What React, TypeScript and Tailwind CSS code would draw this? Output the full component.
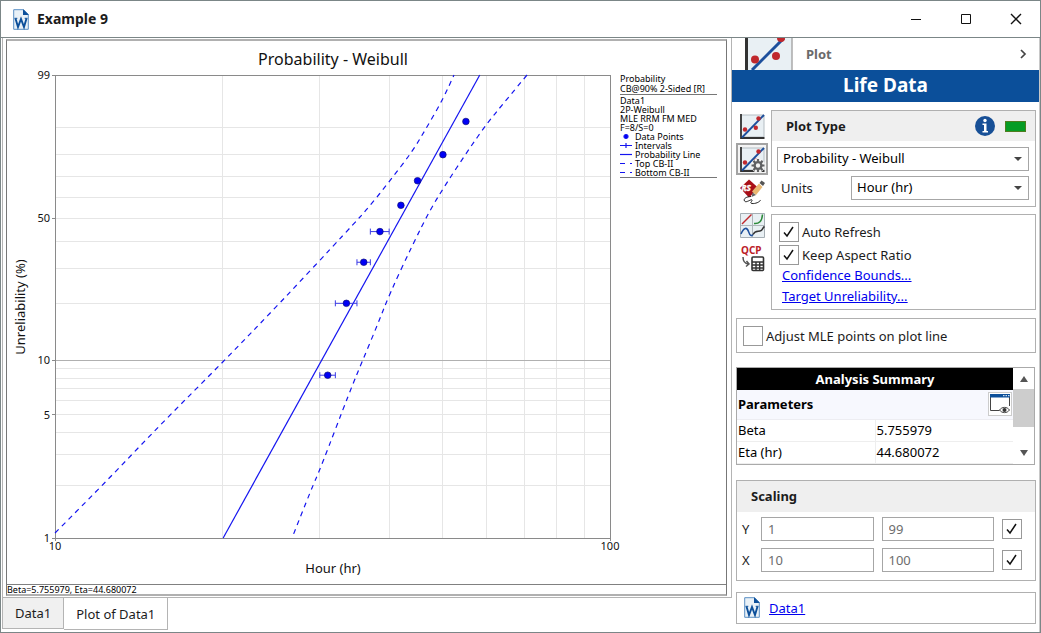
import { useState } from "react";
import type { ReactNode } from "react";
import clsx from "clsx";

// plot area of the chart, in svg units
const LEFT = 55;
const RIGHT = 610;
const TOP = 75;
const BOTTOM = 538;

const weibull = (percent: number) => Math.log(-Math.log(1 - percent / 100));
const xOf = (hours: number) => LEFT + Math.log10(hours / 10) * (RIGHT - LEFT);
const yOf = (percent: number) =>
  TOP +
  ((weibull(99) - weibull(percent)) / (weibull(99) - weibull(1))) *
    (BOTTOM - TOP);

const xGrid = [20, 30, 40, 50, 60, 70, 80, 90];
const yGrid = [2, 3, 4, 5, 6, 7, 8, 9, 20, 30, 40, 50, 60, 70, 80, 90];
const yTicks = [1, 5, 10, 50, 99];

const dataPoints = [
  { hours: 31, percent: 8.3, from: 30, to: 32 },
  { hours: 33.5, percent: 20.1, from: 32, to: 35 },
  { hours: 36, percent: 32.05, from: 35, to: 37 },
  { hours: 38.5, percent: 44, from: 37, to: 40 },
  { hours: 42, percent: 56 },
  { hours: 45, percent: 67.9 },
  { hours: 50, percent: 79.9 },
  { hours: 55, percent: 91.7 },
];

const topBound = [
  [55, 533], [98, 490], [163, 422], [223, 362], [280, 303], [350, 228],
  [369, 207], [389, 182], [412, 152], [427, 127], [443, 99], [454, 75],
];
const bottomBound = [
  [527, 75], [508, 98], [488, 122], [467, 152], [446, 184], [430, 210],
  [413, 244], [390, 293], [377, 326], [362, 362], [350, 391], [321, 467],
  [311, 490], [292, 538],
];

// quadratic curve through the midpoints of the segments
function smooth(points: number[][]) {
  let d = `M${points[0].join(" ")}`;
  for (let i = 1; i < points.length - 1; i++) {
    const [x, y] = points[i];
    const [nx, ny] = points[i + 1];
    d += `Q${x} ${y} ${(x + nx) / 2} ${(y + ny) / 2}`;
  }
  return d + `L${points[points.length - 1].join(" ")}`;
}

function ProbabilityPlot() {
  return (
    <svg
      viewBox="7 41 613 543"
      className="block h-auto min-w-0 flex-1"
      fill="#111"
      role="img"
      aria-label="Weibull probability plot"
    >
      <text x="333" y="65" fontSize="16" textAnchor="middle">
        Probability - Weibull
      </text>

      <g stroke="#e6e6e6" shapeRendering="crispEdges">
        {xGrid.map((v) => (
          <line key={v} x1={xOf(v)} x2={xOf(v)} y1={TOP} y2={BOTTOM} />
        ))}
        {yGrid.map((v) => (
          <line key={v} x1={LEFT} x2={RIGHT} y1={yOf(v)} y2={yOf(v)} />
        ))}
      </g>
      <g stroke="#8a8a8a" fill="none" shapeRendering="crispEdges">
        <line x1={LEFT} x2={RIGHT} y1={yOf(10)} y2={yOf(10)} stroke="#b0b0b0" />
        <rect x={LEFT} y={TOP} width={RIGHT - LEFT} height={BOTTOM - TOP} />
        {yTicks.map((v) => (
          <line key={v} x1={LEFT - 3} x2={LEFT} y1={yOf(v)} y2={yOf(v)} />
        ))}
        <line x1={LEFT} x2={LEFT} y1={BOTTOM} y2={BOTTOM + 3} />
        <line x1={RIGHT} x2={RIGHT} y1={BOTTOM} y2={BOTTOM + 3} />
      </g>

      <g fontSize="11">
        {yTicks.map((v) => (
          <text key={v} x="50" y={yOf(v) + 4} textAnchor="end">
            {v}
          </text>
        ))}
        <text x="55" y="550" textAnchor="middle">
          10
        </text>
        <text x="610" y="550" textAnchor="middle">
          100
        </text>
      </g>
      <g fontSize="13" textAnchor="middle">
        <text x="333" y="573">
          Hour (hr)
        </text>
        <text transform="translate(25 307) rotate(-90)">Unreliability (%)</text>
      </g>

      <g stroke="#1414f0" strokeWidth="1.2" fill="none">
        <line x1={xOf(20.09)} y1={BOTTOM} x2={xOf(58.26)} y2={TOP} />
        <path d={smooth(topBound)} strokeDasharray="5 4.5" />
        <path d={smooth(bottomBound)} strokeDasharray="5 4.5" />
      </g>
      {dataPoints.map((p) => (
        <g key={p.hours}>
          {p.from && p.to && (
            <path
              d={`M${xOf(p.from)} ${yOf(p.percent)}H${xOf(p.to)}m0 -3v6M${xOf(p.from)} ${yOf(p.percent) - 3}v6`}
              stroke="#3a3ae6"
            />
          )}
          <circle
            cx={xOf(p.hours)}
            cy={yOf(p.percent)}
            r="3.3"
            fill="#0000f5"
            stroke="#10107a"
            strokeWidth="0.7"
          />
        </g>
      ))}
    </svg>
  );
}

function LegendRow({ mark, children }: { mark: ReactNode; children: ReactNode }) {
  return (
    <li className="flex gap-[3px]">
      <svg
        viewBox="0 0 12 9"
        className="h-[9px] w-3 shrink-0"
        stroke="#1414f0"
        strokeWidth="1.2"
      >
        {mark}
      </svg>
      {children}
    </li>
  );
}

function Legend() {
  return (
    <aside className="mt-[33px] w-[106px] shrink-0 pr-[9px] text-[9px] leading-[9px] whitespace-nowrap">
      <div className="border-b border-[#777] leading-[10px]">
        <p>Probability</p>
        <p>CB@90% 2-Sided [R]</p>
      </div>
      <div className="border-b border-[#777] pt-px">
        <p>Data1</p>
        <p>2P-Weibull</p>
        <p>MLE RRM FM MED</p>
        <p>F=8/S=0</p>
        <ul>
          <LegendRow mark={<circle cx="6" cy="4.5" r="2" fill="#0000f5" />}>
            Data Points
          </LegendRow>
          <LegendRow mark={<path d="M0 4.5h12M6 2v5" />}>Intervals</LegendRow>
          <LegendRow mark={<path d="M0 4.5h12" />}>Probability Line</LegendRow>
          <LegendRow mark={<path d="M0 4.5h5m5 0h2" />}>Top CB-II</LegendRow>
          <LegendRow mark={<path d="M0 4.5h5m5 0h2" />}>Bottom CB-II</LegendRow>
        </ul>
      </div>
    </aside>
  );
}

function WordDocIcon() {
  return (
    <svg viewBox="0 0 16 21" className="h-[21px] w-4 shrink-0" fill="none">
      <path d="M.7.7h10l4.600 4.600v15H.7z" fill="#e9f1f7" stroke="#5a8fc4" />
      <path d="M10 .2 15.800 6H10z" fill="#0c4f9a" />
      <path
        d="M2.500 9.500 5 18l3-8 3 8 2.500-8.500"
        stroke="#0c4f9a"
        strokeWidth="1.900"
      />
      <path d="M1.500 9.300h2.800M11.700 9.300h2.800" stroke="#0c4f9a" />
    </svg>
  );
}

function ScatterIcon({ gear = false }: { gear?: boolean }) {
  return (
    <svg viewBox="0 0 25 25" className="size-[25px]" fill="none">
      <path d="M1 1h23v22H1z" fill="#e9f0f4" stroke="#b4bdc3" />
      <path d="M1 0v24h23.500" stroke="#333" strokeWidth="1.800" />
      <path d="M2 23.500 24 1" stroke="#1d4f9c" strokeWidth="1.900" />
      <g fill="#c0282d">
        <circle cx="5" cy="15.500" r="2.200" />
        <circle cx="18.500" cy="4.500" r="2.200" />
        <circle cx="15.800" cy="13.800" r="2.200" />
      </g>
      {gear && (
        <g>
          <circle cx="18" cy="18.500" r="7" fill="#f4f4f4" />
          <circle cx="18" cy="18.500" r="3.400" stroke="#5f6062" strokeWidth="2.400" />
          <path
            d="M18 12v2.500M18 22.500V25M11.500 18.500H14M22 18.500h2.500M13.400 13.900l1.800 1.800M20.800 21.300l1.800 1.800M13.400 23.100l1.800-1.800M20.800 15.700l1.800-1.800"
            stroke="#5f6062"
            strokeWidth="2.200"
          />
        </g>
      )}
    </svg>
  );
}

function DrawIcon() {
  return (
    <svg viewBox="0 0 25 27" className="h-[27px] w-[25px]" fill="none">
      <path d="m9 .5 9.500 8.500L9 18.500 0 9z" fill="#a80f18" />
      <text
        x="1.5"
        y="12"
        fontSize="8"
        fontWeight="700"
        fontStyle="italic"
        fill="#fff"
        stroke="#fff"
        strokeWidth="0.4"
      >
        RS
      </text>
      <path d="m19 4.500 3.500 3.500-6.500 8-4-3.500z" fill="#e9b872" />
      <path d="m19.500 4 2-2.500L25 4l-2 3z" fill="#555" />
      <path d="m12.500 13.500 3.500 2.500-4.500 2z" fill="#666" />
      <path
        d="M11 17.500c-4 0-8 2-6.500 4.500s7-2.500 7.500-1-3 3 0 3.500 8-1.500 8.500-3.500"
        stroke="#222"
      />
    </svg>
  );
}

function MultiPlotIcon() {
  return (
    <svg viewBox="0 0 25 25" className="size-[25px]" fill="none">
      <path d="M.5.5h24v24H.5z" fill="#e9f0f4" stroke="#a5aeb4" />
      <path d="M12.500 1v23M1 12.500h23" stroke="#aeb6bb" />
      <path d="M2 11 11.500 1.500" stroke="#c0282d" strokeWidth="1.500" />
      <path d="M14 10.500c5 .5 8-2 8.500-9" stroke="#2b8a3a" strokeWidth="1.500" />
      <path d="M1 21c3-7 6-7 7.500-2.500s3 5 4.500 3" stroke="#1d4f9c" strokeWidth="1.500" />
      <path d="M13 21.500c2-4 4-3 7-3.500s2-3 4.500-4.500" stroke="#333" strokeWidth="1.500" />
    </svg>
  );
}

function QcpIcon() {
  return (
    <svg viewBox="0 0 25 27" className="h-[27px] w-[25px] overflow-visible" fill="none">
      <text x="1" y="9" fontSize="10" fontWeight="700" fill="#bb2027">
        QCP
      </text>
      <path d="M3 12c0 4 1.500 6.500 5.500 7m-2-3 2.500 3-3 2.500" stroke="#555" strokeWidth="1.500" />
      <rect x="12" y="12" width="11.500" height="13.500" rx="1" fill="#fff" stroke="#333" strokeWidth="1.600" />
      <path d="M12 17h11.500M12 20h11.500M12 23h11.500M16 17v8.500M19.700 17v8.500" stroke="#333" strokeWidth="1.400" />
    </svg>
  );
}

function PreviewIcon() {
  return (
    <svg viewBox="0 0 20 20" className="size-5" fill="none">
      <path d="M.5 1v15.500h9" stroke="#444" />
      <path d="M19.500 1v11" stroke="#444" />
      <path d="M0 0h20v3.500H0z" fill="#0c4f9a" />
      <path d="M13 1.700h1.500m1 0H17m1 0h1.500" stroke="#fff" />
      <path d="M9.500 16c2.500-3.500 7.500-3.500 10 0-2.500 3.500-7.500 3.500-10 0z" fill="#fff" stroke="#444" />
      <circle cx="14.500" cy="16" r="2" fill="#333" />
    </svg>
  );
}

function CheckBox({
  id,
  checked = false,
  label,
}: {
  id: string;
  checked?: boolean;
  label?: string;
}) {
  return (
    <span className="relative block size-5 shrink-0">
      <input
        id={id}
        type="checkbox"
        defaultChecked={checked}
        aria-label={label}
        className="peer block size-5 appearance-none border border-[#999] bg-white"
      />
      <svg
        viewBox="0 0 20 20"
        className="pointer-events-none absolute inset-0 hidden size-5 peer-checked:block"
        fill="none"
        stroke="#111"
        strokeWidth="1.500"
      >
        <path d="M5 10.500 8 14l6-9" />
      </svg>
    </span>
  );
}

function DropDown({ id, label, value }: { id: string; label?: string; value: string }) {
  return (
    <div className="relative min-w-0 flex-1">
      <select
        id={id}
        aria-label={label}
        className="block h-6 w-full appearance-none border border-[#a6a6a6] bg-white px-[5px] pb-[2px] text-black"
      >
        <option>{value}</option>
      </select>
      <svg
        viewBox="0 0 8 4"
        className="pointer-events-none absolute top-[10px] right-[7px] h-1 w-2"
        fill="#444"
      >
        <path d="M0 0h8L4 4z" />
      </svg>
    </div>
  );
}

function ScaleRow({ axis, min, max }: { axis: string; min: string; max: string }) {
  return (
    <div className="flex items-center gap-2">
      <span className="w-[11px]">{axis}</span>
      <input
        defaultValue={min}
        disabled
        aria-label={`${axis} minimum`}
        className="h-6 w-0 flex-1 border border-[#a6a6a6] bg-white px-[6px] text-[#6d6d6d]"
      />
      <input
        defaultValue={max}
        disabled
        aria-label={`${axis} maximum`}
        className="h-6 w-0 flex-1 border border-[#a6a6a6] bg-white px-[6px] text-[#6d6d6d]"
      />
      <CheckBox id={`auto-${axis}`} checked label={`Automatic ${axis} scale`} />
    </div>
  );
}

function TitleBar() {
  return (
    <header className="flex h-[37px] items-center border-b border-[#7b8687] pr-[18px] pl-3">
      <WordDocIcon />
      <h1 className="ml-2 flex-1 text-sm font-bold">Example 9</h1>
      <div className="flex gap-[38px]">
        <button aria-label="Minimize">
          <svg viewBox="0 0 12 12" className="size-3" stroke="#111">
            <path d="M1 6.500h10" />
          </svg>
        </button>
        <button aria-label="Maximize">
          <svg viewBox="0 0 12 12" className="size-3" stroke="#111" fill="none">
            <path d="M1.500 1.500h9v9h-9z" />
          </svg>
        </button>
        <button aria-label="Close">
          <svg viewBox="0 0 12 12" className="size-3" stroke="#111" strokeWidth="1.400">
            <path d="m1 1 10 10M11 1 1 11" />
          </svg>
        </button>
      </div>
    </header>
  );
}

const tools = [
  { name: "Plot", icon: <ScatterIcon /> },
  { name: "Plot setup", icon: <ScatterIcon gear /> },
  { name: "RS Draw", icon: <DrawIcon /> },
  { name: "Overlay plots", icon: <MultiPlotIcon /> },
  { name: "QCP", icon: <QcpIcon /> },
];

function AnalysisSummary() {
  return (
    <section className="mt-[14px] mr-px flex border border-[#aaa]">
      <table className="flex-1 table-fixed border-collapse text-left text-black">
        <thead>
          <tr className="h-[22px] bg-black text-center text-white">
            <th colSpan={2}>Analysis Summary</th>
          </tr>
        </thead>
        <tbody className="leading-5">
          <tr className="h-[29px] border-b border-[#ededf2] bg-[#f7f8fe]">
            <th colSpan={2} className="pr-px pl-px">
              <div className="flex items-center justify-between">
                Parameters
                <button
                  aria-label="Show report"
                  className="grid size-6 place-items-center border border-[#ccc] bg-white"
                >
                  <PreviewIcon />
                </button>
              </div>
            </th>
          </tr>
          <tr className="h-[22px] border-b border-[#eee]">
            <td className="w-1/2 border-r border-[#eee] pl-px">Beta</td>
            <td className="pl-px">5.755979</td>
          </tr>
          <tr className="h-[22px] border-b border-[#eee]">
            <td className="border-r border-[#eee] pl-px">Eta (hr)</td>
            <td className="pl-px">44.680072</td>
          </tr>
        </tbody>
      </table>
      <div className="flex w-[21px] flex-col items-center justify-between">
        <button aria-label="Scroll up" className="grid h-[21px] place-items-center">
          <svg viewBox="0 0 8 6" className="h-[6px] w-2" fill="#555">
            <path d="M0 6h8L4 0z" />
          </svg>
        </button>
        <div className="mb-auto h-[38px] w-full bg-[#cdcdcd]" />
        <button aria-label="Scroll down" className="grid h-[21px] place-items-center">
          <svg viewBox="0 0 8 6" className="h-[6px] w-2" fill="#555">
            <path d="M0 0h8L4 6z" />
          </svg>
        </button>
      </div>
    </section>
  );
}

function ControlPanel() {
  const [tool, setTool] = useState("Plot setup");

  return (
    <aside className="w-[308px] shrink-0 border-r border-[#c8c8c8]">
      <div className="flex h-8 items-center pr-3 pl-[13px]">
        <svg viewBox="0 0 48 32" className="h-8 w-12" fill="none">
          <path d="M1 0h46v32H1z" fill="#e9f0f4" />
          <path d="M47 0v32" stroke="#aaa" strokeWidth="1.500" />
          <path d="M1.500 0v32" stroke="#333" strokeWidth="3" />
          <path d="M7 32 39 0" stroke="#1d4f9c" strokeWidth="3" />
          <g fill="#c0282d">
            <circle cx="10" cy="21.500" r="4" />
            <circle cx="31" cy="18" r="4" />
            <path d="M32 0h8a4 4 0 0 1-8 0z" />
          </g>
        </svg>
        <h2 className="ml-[13px] flex-1 font-bold text-[#6a6a6a]">Plot</h2>
        <button aria-label="Next page">
          <svg viewBox="0 0 8 10" className="h-[10px] w-2" fill="none" stroke="#444" strokeWidth="1.700">
            <path d="m2 1 4 4-4 4" />
          </svg>
        </button>
      </div>
      <h2 className="bg-[#0b4f9a] pb-[2px] text-center text-[19px] leading-[30px] font-bold text-white">
        Life Data
      </h2>

      <div className="pt-2 pr-[3px] pl-1">
        <div className="flex">
          <nav className="flex w-[35px] shrink-0 flex-col items-start gap-px">
            {tools.map(({ name, icon }) => (
              <button
                key={name}
                aria-label={name}
                onClick={() => setTool(name)}
                className={clsx(
                  "grid h-8 w-8 place-items-center border-2",
                  tool === name
                    ? "border-[#a3a3a3] bg-[#f4f4f4]"
                    : "border-transparent"
                )}
              >
                {icon}
              </button>
            ))}
          </nav>

          <div className="min-w-0 flex-1">
            <section className="border border-[#b0b0b0] pb-[6px]">
              <div className="flex h-[30px] items-center bg-[#efefef] pr-[9px] pl-[14px]">
                <h3 className="flex-1 font-bold">Plot Type</h3>
                <svg viewBox="0 0 20 20" className="size-5">
                  <circle cx="10" cy="10" r="10" fill="#174f96" />
                  <circle cx="10" cy="4.500" r="1.700" fill="#fff" />
                  <path d="M7.500 7.500h4v7.500h1.500v1.500h-5.500V15H9V9H7.500z" fill="#fff" />
                </svg>
                <span className="ml-[10px] h-[11px] w-[21px] border border-[#4e7d1f] bg-[#069c24]" />
              </div>
              <div className="mt-[6px] flex pr-[6px] pl-[5px]">
                <DropDown id="plot-type" label="Plot Type" value="Probability - Weibull" />
              </div>
              <div className="mt-[5px] flex items-center pr-[6px] pl-[9px]">
                <label htmlFor="units" className="w-[70px]">
                  Units
                </label>
                <DropDown id="units" value="Hour (hr)" />
              </div>
            </section>

            <section className="mt-[7px] h-24 border border-[#b0b0b0] pt-[7px] pl-[7px]">
              <div className="flex items-center gap-[3px]">
                <CheckBox id="auto-refresh" checked />
                <label htmlFor="auto-refresh">Auto Refresh</label>
              </div>
              <div className="mt-[3px] flex items-center gap-[3px]">
                <CheckBox id="keep-aspect" checked />
                <label htmlFor="keep-aspect">Keep Aspect Ratio</label>
              </div>
              <div className="flex flex-col items-start pl-[3px] leading-[21px] text-[#0000ee] underline">
                <a href="#bounds">Confidence Bounds...</a>
                <a href="#target">Target Unreliability...</a>
              </div>
            </section>
          </div>
        </div>

        <section className="mt-2 flex h-[35px] items-center gap-[3px] border border-[#b0b0b0] pl-[6px]">
          <CheckBox id="adjust-mle" />
          <label htmlFor="adjust-mle">Adjust MLE points on plot line</label>
        </section>

        <AnalysisSummary />

        <section className="mt-[15px] border border-[#b0b0b0] pb-2">
          <h3 className="bg-[#efefef] pl-[14px] leading-[31px] font-bold">Scaling</h3>
          <div className="mt-[5px] flex flex-col gap-[7px] pr-[13px] pl-[5px]">
            <ScaleRow axis="Y" min="1" max="99" />
            <ScaleRow axis="X" min="10" max="100" />
          </div>
        </section>

        <section className="mt-[11px] flex h-8 items-center gap-[9px] border border-[#b0b0b0] pl-[7px]">
          <WordDocIcon />
          <a href="#data1" className="text-[#0000ee] underline">
            Data1
          </a>
        </section>
      </div>
    </aside>
  );
}

export default function App() {
  return (
    <div className="flex min-h-screen flex-col border border-[#7b8687] bg-white font-['Noto_Sans',sans-serif] text-[13px] leading-5 text-[#1c1c1c]">
      <TitleBar />
      <div className="flex flex-1">
        <main className="min-w-0 flex-1 pl-px">
          <div className="border-x border-b border-[#b4b4b4] pt-px pr-1 pb-px pl-[3px]">
            <div className="border-x border-y-2 border-x-[#777] border-y-[#b0b0b0] text-black">
              <div className="flex items-start">
                <ProbabilityPlot />
                <Legend />
              </div>
              <p className="border-t border-[#808080] text-[9px] leading-[9px]">
                Beta=5.755979, Eta=44.680072
              </p>
            </div>
          </div>
          <div role="tablist" className="flex items-start">
            <button
              role="tab"
              aria-selected="false"
              className="h-[31px] border border-t-0 border-[#b4b4b4] bg-[#f0f0f0] px-3"
            >
              Data1
            </button>
            <button
              role="tab"
              aria-selected="true"
              className="h-8 border-r border-b border-[#b4b4b4] px-3"
            >
              Plot of Data1
            </button>
          </div>
        </main>
        <ControlPanel />
      </div>
    </div>
  );
}
